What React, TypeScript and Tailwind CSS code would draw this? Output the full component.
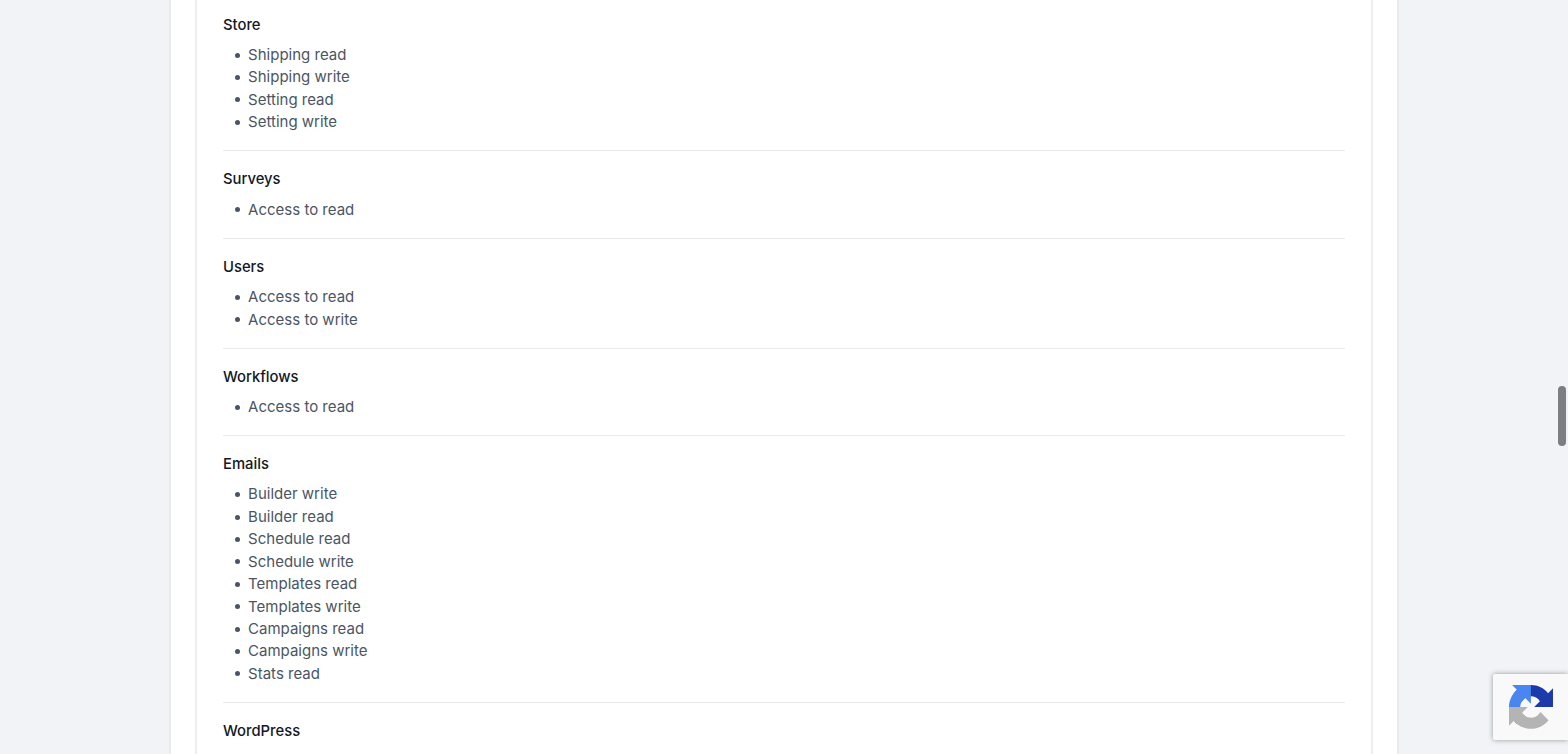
const sections = [
  { title: "Store", items: ["Shipping read", "Shipping write", "Setting read", "Setting write"] },
  { title: "Surveys", items: ["Access to read"] },
  { title: "Users", items: ["Access to read", "Access to write"] },
  { title: "Workflows", items: ["Access to read"] },
  {
    title: "Emails",
    items: [
      "Builder write",
      "Builder read",
      "Schedule read",
      "Schedule write",
      "Templates read",
      "Templates write",
      "Campaigns read",
      "Campaigns write",
      "Stats read",
    ],
  },
  { title: "WordPress", items: [] as string[] },
];

function RecaptchaBadge() {
  return (
    <div className="fixed right-0 top-[674px] flex h-[66px] w-[75px] items-center justify-center rounded-l-[2px] bg-[#f9f9f9] shadow-[0_0_5px_rgba(128,128,128,0.8)]">
      <svg viewBox="0 0 64 64" className="h-[44px] w-[44px]">
        <path
          d="M64 31.955l-.033-1.37V4.687l-7.16 7.16C50.948 4.674 42.033.093 32.05.093c-10.4 0-19.622 4.96-25.458 12.64l11.736 11.86a15.55 15.55 0 0 1 4.754-5.334c2.05-1.6 4.952-2.906 8.968-2.906.485 0 .86.057 1.135.163 4.976.393 9.288 3.14 11.828 7.124l-8.307 8.307 32.294.01"
          fill="#1c3aa9"
        />
        <path
          d="M31.862 0l-1.37.033H4.594l7.16 7.16C4.58 13.052 0 21.967 0 31.95c0 10.4 4.96 19.622 12.64 25.458L24.5 45.672a15.55 15.55 0 0 1-5.334-4.754c-1.6-2.05-2.906-4.952-2.906-8.968 0-.485.057-.86.163-1.135.393-4.976 3.14-9.288 7.124-11.828l8.307 8.307L31.862 0"
          fill="#4a86f0"
        />
        <path
          d="M.001 31.95l.033 1.37v25.898l7.16-7.16c5.86 7.173 14.775 11.754 24.76 11.754 10.4 0 19.622-4.96 25.458-12.64l-11.736-11.86a15.55 15.55 0 0 1-4.754 5.334c-2.05 1.6-4.952 2.906-8.968 2.906-.485 0-.86-.057-1.135-.163-4.976-.393-9.288-3.14-11.828-7.124l8.307-8.307L0 31.95"
          fill="#b4b4b4"
        />
      </svg>
    </div>
  );
}

export default function App() {
  return (
    <div className="h-screen overflow-hidden bg-[#f1f3f7] font-['Inter',sans-serif]">
      <div className="mx-auto h-full w-[1230px] border-x-2 border-[#e9ebef] bg-white px-[24px]">
        <div className="h-full border-x-2 border-[#eceef1] px-[26px] pt-[13.5px]">
          {sections.map((s, i) => (
            <div key={s.title} className={i > 0 ? "mt-[16.88px] border-t border-[#e8eaed] pt-[16.8px]" : ""}>
              <h3 className="text-[14.8px] leading-[22.4px] font-medium text-[#111827]">{s.title}</h3>
              {s.items.length > 0 && (
                <ul className="mt-[8px] text-[15px] leading-[22.4px] text-[#4b5563]">
                  {s.items.map((item) => (
                    <li key={item} className="flex items-center pl-[12px]">
                      <span className="mr-[8.1px] h-[5px] w-[5px] rounded-full bg-[#4b5563]" />
                      {item}
                    </li>
                  ))}
                </ul>
              )}
            </div>
          ))}
        </div>
      </div>
      <div className="fixed right-[2px] top-[386px] h-[60px] w-[8px] rounded-full bg-[#7c7e82]" />
      <RecaptchaBadge />
    </div>
  );
}
